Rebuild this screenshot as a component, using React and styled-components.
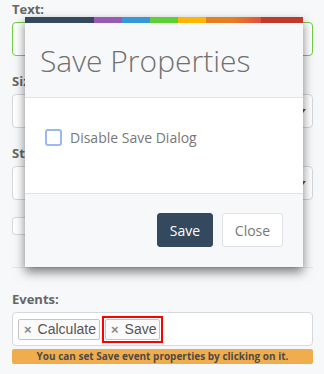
import React from "react";
import styled, { createGlobalStyle } from "styled-components";

const Global = createGlobalStyle`
  html, body {
    margin: 0;
    padding: 0;
    background: #f7f8fa;
    font-family: "Open Sans", "Liberation Sans", sans-serif;
  }
`;

const Page = styled.div`
  position: relative;
  width: 324px;
  height: 374px;
  overflow: hidden;
  padding: 0 11px 0 12px;
  box-sizing: border-box;
`;

const Group = styled.div`
  margin-bottom: ${(p) => p.$gap ?? 16}px;
`;

const Label = styled.div`
  font-size: 13px;
  font-weight: 700;
  color: #666;
  line-height: 18px;
  margin-bottom: 4px;
`;

const Input = styled.div`
  position: relative;
  height: 34px;
  box-sizing: border-box;
  border: 1px solid ${(p) => (p.$focus ? "#6fcf45" : "#d5d8dc")};
  border-radius: 4px;
  background: #fff;
`;

const Caret = styled.span`
  position: absolute;
  right: 6px;
  top: 14px;
  border-left: 3px solid transparent;
  border-right: 3px solid transparent;
  border-top: 4px solid #555;
`;

const SmallBox = styled.div`
  width: 15px;
  height: 16px;
  border: 1px solid #d5d8dc;
  border-radius: 3px;
  background: #fff;
  margin-top: 17px;
`;

const Divider = styled.hr`
  border: 0;
  border-top: 1px solid #e3e5e8;
  margin: 32px 0 22px;
`;

const TagBox = styled.div`
  display: flex;
  align-items: center;
  gap: 2px;
  height: 34px;
  box-sizing: border-box;
  padding: 0 5px;
  border: 1px solid #d5d8dc;
  border-radius: 4px;
  background: #fff;
`;

const Tag = styled.span`
  display: inline-flex;
  align-items: center;
  gap: 6px;
  height: 21px;
  box-sizing: border-box;
  padding: 0 3px 0 5px;
  border: 1px solid #c5c5c5;
  border-radius: 2px;
  background: #fafafa;
  font-family: "Liberation Sans", Arial, sans-serif;
  font-size: 14px;
  color: #555;
`;

const Highlight = styled.span`
  display: inline-flex;
  padding: 1px;
  border: 2px solid #f00;
`;

const TagX = styled.span`
  font-size: 13px;
  font-weight: 700;
  color: #888;
`;

const Hint = styled.div`
  margin-top: 3px;
  height: 15px;
  line-height: 15px;
  border-radius: 2px;
  background: #f0ad4e;
  color: #4f4a45;
  font-size: 10px;
  font-weight: 700;
  text-align: center;
`;

/* modal overlay */
const Modal = styled.div`
  position: absolute;
  top: 17px;
  left: 25px;
  width: 278px;
  background: #fff;
  box-shadow: 0 5px 10px rgba(0, 0, 0, 0.5);
`;

const ColorBar = styled.div`
  display: flex;
  height: 6px;
`;

const Seg = styled.div`
  width: ${(p) => p.$w}px;
  background: ${(p) => p.$c};
`;

const Header = styled.div`
  height: 74px;
  background: #f7f8fa;
  border-bottom: 1px solid #e1e3e6;
  padding: 0 15px;
  display: flex;
  align-items: center;
`;

const Title = styled.h3`
  margin: 0;
  font-size: 30px;
  font-weight: 300;
  color: #707070;
`;

const Body = styled.div`
  height: 95px;
  padding: 30px 20px 0;
  box-sizing: border-box;
`;

const CheckRow = styled.label`
  display: flex;
  align-items: center;
  gap: 8px;
  font-size: 14px;
  color: #777;
`;

const Check = styled.span`
  width: 17px;
  height: 17px;
  box-sizing: border-box;
  border: 2px solid #9ab9ef;
  border-radius: 3px;
  background: #fff;
`;

const Footer = styled.div`
  height: 74px;
  background: #f7f8fa;
  border-top: 1px solid #e1e3e6;
  display: flex;
  justify-content: flex-end;
  align-items: flex-start;
  gap: 9px;
  padding: 19px 20px 0 0;
  box-sizing: border-box;
`;

const Button = styled.button`
  height: 34px;
  width: ${(p) => (p.$primary ? 56 : 61)}px;
  padding: 0;
  border-radius: 3px;
  font-family: "Open Sans", sans-serif;
  font-size: 14px;
  border: 1px solid ${(p) => (p.$primary ? "#34495e" : "#dfe1e4")};
  background: ${(p) => (p.$primary ? "#34495e" : "#fff")};
  color: ${(p) => (p.$primary ? "#fff" : "#777")};
`;

const segments = [
  ["#34495e", 69],
  ["#9b59b6", 28],
  ["#3498db", 28],
  ["#5fcf36", 28],
  ["#ffb400", 28],
  ["linear-gradient(to right, #e67e22 0%, #e67e22 50%, #e74c3c 100%)", 55],
  ["#c0392b", 42],
];

export default function App() {
  return (
    <>
      <Global />
      <Page>
        <Group>
          <Label>Text:</Label>
          <Input $focus />
        </Group>
        <Group>
          <Label>Size:</Label>
          <Input>
            <Caret />
          </Input>
        </Group>
        <Group $gap={0}>
          <Label>Style:</Label>
          <Input>
            <Caret />
          </Input>
        </Group>
        <SmallBox />
        <Divider />
        <Label>Events:</Label>
        <TagBox>
          <Tag>
            <TagX>×</TagX>Calculate
          </Tag>
          <Highlight>
            <Tag>
              <TagX>×</TagX>Save
            </Tag>
          </Highlight>
        </TagBox>
        <Hint>You can set Save event properties by clicking on it.</Hint>

        <Modal>
          <ColorBar>
            {segments.map(([c, w], i) => (
              <Seg key={i} $c={c} $w={w} />
            ))}
          </ColorBar>
          <Header>
            <Title>Save Properties</Title>
          </Header>
          <Body>
            <CheckRow>
              <Check />
              Disable Save Dialog
            </CheckRow>
          </Body>
          <Footer>
            <Button $primary>Save</Button>
            <Button>Close</Button>
          </Footer>
        </Modal>
      </Page>
    </>
  );
}
